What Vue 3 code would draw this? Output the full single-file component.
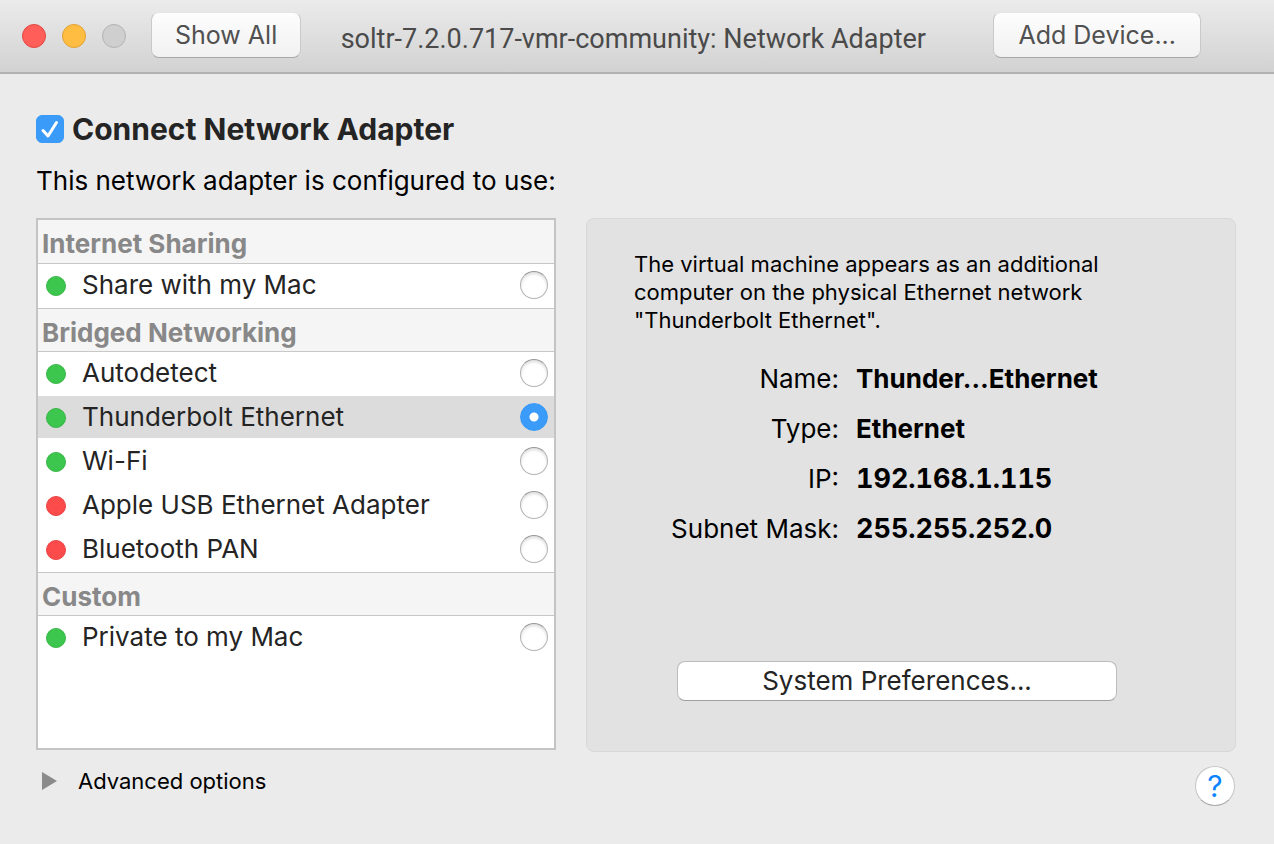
<script setup>
import { ref } from 'vue'

const connected = ref(true)
const selected = ref('thunderbolt')

const groups = [
  { title: 'Internet Sharing', items: [{ id: 'share', label: 'Share with my Mac', up: true }] },
  {
    title: 'Bridged Networking',
    items: [
      { id: 'auto', label: 'Autodetect', up: true },
      { id: 'thunderbolt', label: 'Thunderbolt Ethernet', up: true },
      { id: 'wifi', label: 'Wi-Fi', up: true },
      { id: 'usb', label: 'Apple USB Ethernet Adapter', up: false },
      { id: 'bluetooth', label: 'Bluetooth PAN', up: false },
    ],
  },
  { title: 'Custom', items: [{ id: 'private', label: 'Private to my Mac', up: true }] },
]

const details = [
  { term: 'Name:', value: 'Thunder…Ethernet' },
  { term: 'Type:', value: 'Ethernet' },
  { term: 'IP:', value: '192.168.1.115', numeric: true },
  { term: 'Subnet Mask:', value: '255.255.252.0', numeric: true },
]
</script>

<template>
  <div class="window">
    <header class="titlebar">
      <div class="lights">
        <button class="light close" type="button" aria-label="Close"></button>
        <button class="light minimize" type="button" aria-label="Minimize"></button>
        <button class="light zoom" type="button" aria-label="Zoom" disabled></button>
      </div>
      <button class="tool show-all" type="button">Show All</button>
      <h1 class="title">soltr-7.2.0.717-vmr-community: Network Adapter</h1>
      <button class="tool" type="button">Add Device...</button>
    </header>

    <main class="content">
      <label class="connect">
        <span class="check">
          <input v-model="connected" type="checkbox" />
          <svg v-if="connected" viewBox="0 0 28 28" aria-hidden="true">
            <path d="M7 15.5 12 21 20.5 7.5" />
          </svg>
        </span>
        <span>Connect Network Adapter</span>
      </label>
      <p class="intro">This network adapter is configured to use:</p>

      <div class="columns">
        <div class="list">
          <section v-for="group in groups" :key="group.title" class="group">
            <h2 class="group-title">{{ group.title }}</h2>
            <label
              v-for="item in group.items"
              :key="item.id"
              class="row"
              :class="{ active: selected === item.id }"
            >
              <span class="dot" :class="{ down: !item.up }"></span>
              <span class="name">{{ item.label }}</span>
              <input v-model="selected" type="radio" name="network" :value="item.id" />
            </label>
          </section>
        </div>

        <section class="panel">
          <p class="description">
            The virtual machine appears as an additional computer on the physical Ethernet network
            "Thunderbolt Ethernet".
          </p>
          <dl class="details">
            <template v-for="d in details" :key="d.term">
              <dt>{{ d.term }}</dt>
              <dd :class="{ numeric: d.numeric }">{{ d.value }}</dd>
            </template>
          </dl>
          <button class="preferences" type="button">System Preferences...</button>
        </section>
      </div>

      <footer class="footer">
        <button class="advanced" type="button">
          <svg viewBox="0 0 16 18" aria-hidden="true"><path d="M1 0 16 9 1 18Z" /></svg>
          <span>Advanced options</span>
        </button>
        <button class="help" type="button" aria-label="Help">?</button>
      </footer>
    </main>
  </div>
</template>

<style>
body {
  background: #ebebeb;
}
</style>

<style scoped>
.window {
  min-height: 100vh;
  background: #ebebeb;
  color: #000;
  font-family: Inter, Roboto, "Liberation Sans", sans-serif;
  font-size: 26px;
  line-height: 32px;
}
.window * {
  box-sizing: border-box;
}
h1,
h2,
p,
dl,
dd {
  margin: 0;
}
button {
  padding: 0;
  border: 0;
  font: inherit;
}
input {
  appearance: none;
  margin: 0;
}
.titlebar {
  display: flex;
  align-items: flex-start;
  height: 74px;
  padding: 12px 73px 0 22px;
  border-bottom: 2px solid #b1b1b1;
  background: linear-gradient(#ebebeb, #d2d2d2);
}
.lights {
  display: flex;
  gap: 16px;
  margin: 12px 25px 0 0;
}
.light {
  width: 24px;
  height: 24px;
  border: 1px solid;
  border-radius: 50%;
}
.close {
  border-color: #e2463f;
  background: #ff5f58;
}
.minimize {
  border-color: #e1a032;
  background: #ffbe42;
}
.zoom {
  border-color: #b3b3b3;
  background: #cfcfcf;
}
.tool {
  height: 46px;
  padding: 0 24px;
  border: 1px solid #c9c9c9;
  border-top-color: #e4e4e4;
  border-bottom-color: #a8a8a8;
  border-radius: 8px;
  background: linear-gradient(#fdfdfd, #f1f1f1);
  color: #505050;
  font-size: 25px;
}
.show-all {
  padding: 0 23px;
}
.title {
  flex: 1;
  padding: 11px 28px 0 0;
  color: #4a4a4a;
  font-family: Roboto, "Liberation Sans", sans-serif;
  font-size: 27px;
  font-weight: 400;
  text-align: center;
  white-space: nowrap;
}
.content {
  padding: 35px 38px 38px 36px;
}
.connect {
  display: flex;
  align-items: center;
  gap: 8px;
  height: 40px;
  color: #242424;
  font-size: 30px;
  font-weight: 700;
}
.check {
  position: relative;
  width: 28px;
  height: 28px;
}
.check input {
  display: block;
  width: 28px;
  height: 28px;
  border: 1px solid #b5b5b5;
  border-radius: 6px;
  background: #fff;
}
.check input:checked {
  border-color: #3a9af8;
  background: #3b9bf9;
}
.check svg {
  position: absolute;
  inset: 0;
  fill: none;
  stroke: #fff;
  stroke-width: 3;
  stroke-linecap: round;
  stroke-linejoin: round;
  pointer-events: none;
}
.intro {
  margin: 16px 0 21px;
}
.columns {
  display: grid;
  grid-template-columns: 52fr 65fr;
  gap: 30px;
}
.list {
  min-height: 532px;
  margin-bottom: 2px;
  border: 2px solid #c4c4c4;
  background: #fff;
}
.group-title {
  height: 44px;
  padding: 8px 4px 0;
  border-bottom: 1px solid #c8c8c8;
  background: #f5f5f5;
  color: #888;
  font-size: 26px;
  font-weight: 700;
}
.group + .group .group-title {
  border-top: 1px solid #c8c8c8;
}
.row {
  display: flex;
  align-items: center;
  height: 44px;
  padding: 0 6px 2px 8px;
  color: #242424;
}
.active {
  background: linear-gradient(#dcdcdc, #dcdcdc) top / 100% 42px no-repeat;
}
.dot {
  width: 20px;
  height: 20px;
  margin: 2px 16px 0 0;
  border: 1px solid #38b548;
  border-radius: 50%;
  background: #3dc64e;
}
.dot.down {
  border-color: #e84345;
  background: #fc4b4b;
}
.name {
  flex: 1;
}
.row input {
  width: 28px;
  height: 28px;
  border: 1px solid #b4b4b4;
  border-top-color: #999;
  border-radius: 50%;
  background: #fff;
  box-shadow: inset 0 2px 3px #ddd;
}
.row input:checked {
  border-color: #3a9af8;
  background: radial-gradient(circle, #fff 4px, #3b9bf9 5px);
  box-shadow: none;
}
.panel {
  display: flex;
  flex-direction: column;
  padding: 31px 90px 50px 47px;
  border: 1px solid #d8d8d8;
  border-radius: 8px;
  background: #e2e2e2;
}
.description {
  font-size: 22px;
  line-height: 28px;
}
.details {
  display: grid;
  grid-template-columns: 205px 1fr;
  column-gap: 17px;
  margin-top: 20px;
  line-height: 50px;
}
dt {
  text-align: right;
}
dd {
  font-weight: 700;
  white-space: nowrap;
}
.numeric {
  font-size: 27px;
  font-variant-numeric: tabular-nums;
}
.preferences {
  width: 440px;
  max-width: 100%;
  height: 40px;
  margin: auto 28px 0 43px;
  border: 1px solid #bcbcbc;
  border-bottom-color: #a0a0a0;
  border-radius: 8px;
  background: #fff;
  color: #242424;
}
.footer {
  display: flex;
  align-items: flex-start;
  justify-content: space-between;
  padding: 14px 1px 0 5px;
}
.advanced {
  display: flex;
  align-items: center;
  gap: 21px;
  height: 30px;
  background: none;
  color: #000;
  font-size: 22px;
  line-height: 30px;
}
.advanced svg {
  width: 16px;
  height: 18px;
  fill: #8b8b8b;
}
.help {
  width: 40px;
  height: 40px;
  border: 1px solid #c4c4c4;
  border-bottom-color: #a8a8a8;
  border-radius: 50%;
  background: #fff;
  color: #0a84ff;
  font-size: 30px;
}
</style>
